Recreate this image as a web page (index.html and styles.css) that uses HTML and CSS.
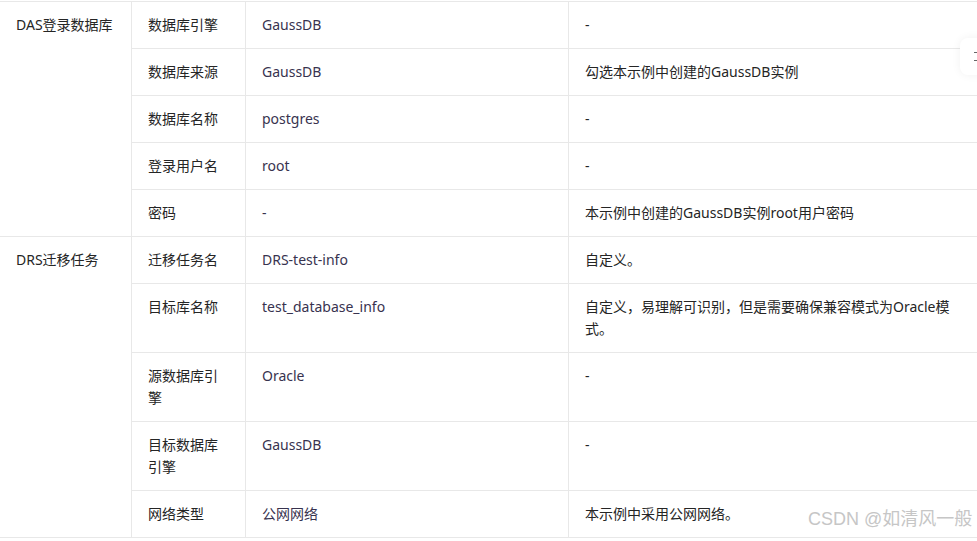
FILE: index.html
```html
<!DOCTYPE html>
<html lang="zh-CN">
<head>
    <meta charset="UTF-8">
    <meta name="viewport" content="width=device-width, initial-scale=1.0">
    <title>DAS与DRS参数配置</title>
    <link rel="stylesheet" href="styles.css">
</head>
<body>

    <table class="paramTable">
        <colgroup>
            <col class="colGroup">
            <col class="colName">
            <col class="colValue">
            <col class="colNote">
        </colgroup>
        <tbody>
            <tr>
                <td class="groupCell" rowspan="5">DAS登录数据库</td>
                <td>数据库引擎</td>
                <td class="valueCell">GaussDB</td>
                <td>-</td>
            </tr>
            <tr>
                <td>数据库来源</td>
                <td class="valueCell">GaussDB</td>
                <td>勾选本示例中创建的GaussDB实例</td>
            </tr>
            <tr>
                <td>数据库名称</td>
                <td class="valueCell">postgres</td>
                <td>-</td>
            </tr>
            <tr>
                <td>登录用户名</td>
                <td class="valueCell">root</td>
                <td>-</td>
            </tr>
            <tr>
                <td>密码</td>
                <td class="valueCell">-</td>
                <td>本示例中创建的GaussDB实例root用户密码</td>
            </tr>
            <tr>
                <td class="groupCell lastGroup" rowspan="5">DRS迁移任务</td>
                <td>迁移任务名</td>
                <td class="valueCell">DRS-test-info</td>
                <td>自定义。</td>
            </tr>
            <tr>
                <td>目标库名称</td>
                <td class="valueCell">test_database_info</td>
                <td>自定义，易理解可识别，但是需要确保兼容模式为Oracle模式。</td>
            </tr>
            <tr>
                <td>源数据库引擎</td>
                <td class="valueCell">Oracle</td>
                <td>-</td>
            </tr>
            <tr>
                <td>目标数据库引擎</td>
                <td class="valueCell">GaussDB</td>
                <td>-</td>
            </tr>
            <tr class="lastRow">
                <td>网络类型</td>
                <td class="valueCell">公网网络</td>
                <td>本示例中采用公网网络。</td>
            </tr>
        </tbody>
    </table>

    <div class="sideTool">
        <svg width="6" height="12" viewBox="0 0 6 12">
            <path d="M1 1.5h3M1 9.5h3" stroke="#666" stroke-width="1" fill="none"/>
        </svg>
    </div>

    <div class="watermark">CSDN @如清风一般</div>

</body>
</html>
```

FILE: styles.css
```css
body {
    margin: 0;
    padding-top: 1px;
    background: #fff;
    font-family: 'Noto Sans', 'Noto Sans CJK SC', sans-serif;
    font-size: 14px;
    color: #252525;
    width: 977px;
    height: 541px;
    overflow: hidden;
    position: relative;
}
.paramTable {
    width: 978px;
    table-layout: fixed;
    border-collapse: separate;
    border-spacing: 0;
}
.colGroup {
    width: 131px;
}
.colName {
    width: 114px;
}
.colValue {
    width: 323px;
}
.colNote {
    width: 410px;
}
.paramTable td {
    padding: 12px 16px;
    line-height: 22px;
    vertical-align: top;
    border-top: 1px solid #e8e8e8;
    border-left: 1px solid #e8e8e8;
    word-break: break-all;
}
.paramTable td.groupCell {
    border-left: none;
}
.paramTable td.lastGroup {
    border-bottom: 1px solid #e8e8e8;
}
.paramTable td.valueCell {
    color: #38334f;
}
.lastRow td {
    border-bottom: 1px solid #e8e8e8;
}
.sideTool {
    position: absolute;
    top: 38px;
    left: 960px;
    width: 34px;
    height: 37px;
    background: #fff;
    border-radius: 8px;
    box-shadow: 0 0 10px rgba(0, 0, 0, 0.06);
    display: flex;
    align-items: center;
    padding-left: 13px;
    box-sizing: border-box;
}
.watermark {
    position: absolute;
    left: 808px;
    top: 507px;
    font-family: 'Liberation Sans', 'Noto Sans CJK SC', sans-serif;
    font-size: 18px;
    line-height: 24px;
    color: #c6c6c6;
    white-space: nowrap;
}
```
